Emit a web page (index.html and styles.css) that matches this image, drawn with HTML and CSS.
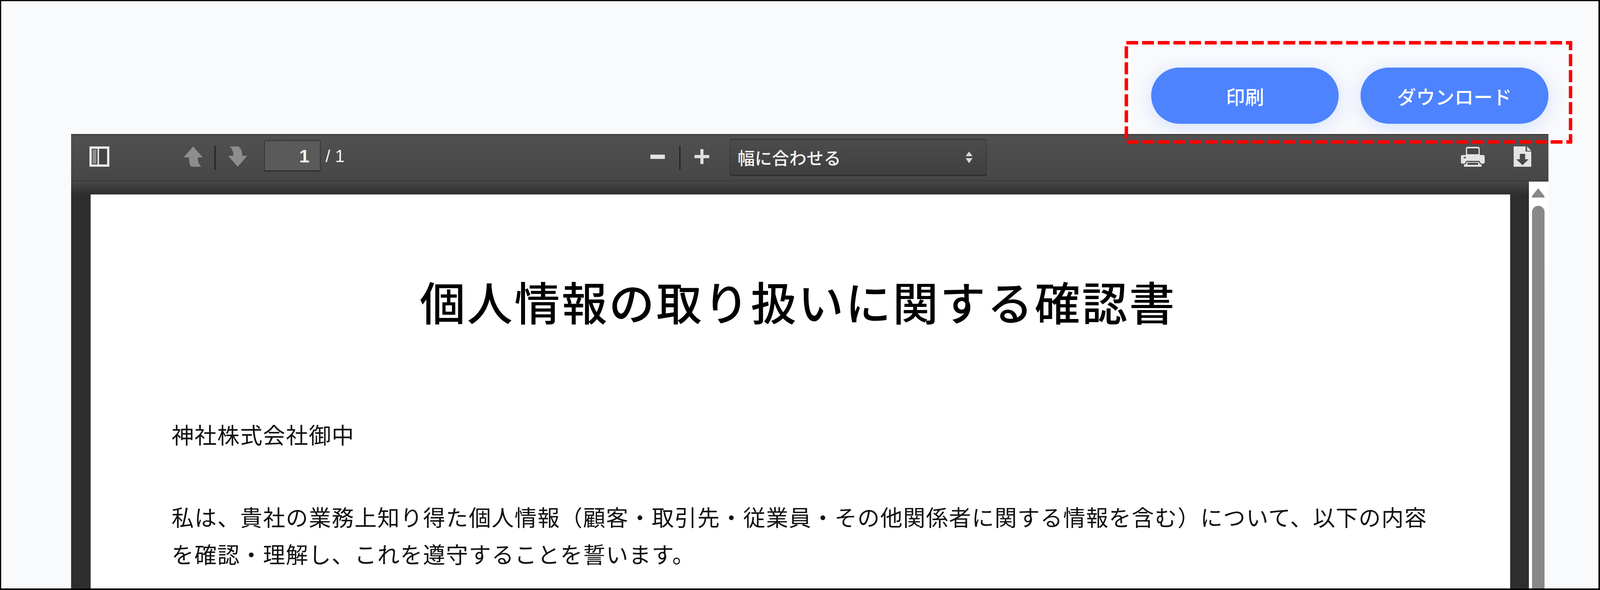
FILE: index.html
```html
<!DOCTYPE html>
<html lang="ja">
<head>
  <meta charset="UTF-8">
  <title>個人情報の取り扱いに関する確認書</title>
  <link rel="stylesheet" href="styles.css">
</head>
<body>

  <div class="frame">
    <div class="actions">
      <button class="action-button">印刷</button>
      <button class="action-button">ダウンロード</button>
    </div>

    <div class="viewer">
      <!-- PDF toolbar -->
      <div class="toolbar">
        <svg class="icon sidebar-icon" viewBox="0 0 52 52" preserveAspectRatio="none">
          <rect x="3" y="3" width="46" height="46" fill="#444" stroke="#e8e8e8" stroke-width="6"/>
          <rect x="8" y="8" width="10" height="36" fill="#8c8c8c"/>
          <rect x="21" y="6" width="4" height="40" fill="#e8e8e8"/>
        </svg>
        <svg class="icon arrow-up" viewBox="0 0 50 52" preserveAspectRatio="none">
          <path d="M25 0 L50 28 H37 C37 38 40 46 46 52 H20 C15 46 14 38 14 28 H0 Z" fill="#8d8d8d"/>
        </svg>
        <div class="divider page-divider"></div>
        <svg class="icon arrow-down" viewBox="0 0 50 52" preserveAspectRatio="none">
          <path d="M25 52 L50 24 H37 C37 14 34 5 27 0 H4 C10 5 14 14 14 24 H0 Z" fill="#8d8d8d"/>
        </svg>
        <div class="page-input">1</div>
        <div class="page-count">/ 1</div>

        <div class="zoom-out"></div>
        <div class="divider zoom-divider"></div>
        <div class="zoom-in"></div>
        <div class="zoom-select">
          <span>幅に合わせる</span>
          <svg class="select-arrows" viewBox="0 0 18 30" preserveAspectRatio="none">
            <path d="M9 0 L18 12 H0 Z M0 17 H18 L9 30 Z" fill="#d8d8d8"/>
          </svg>
        </div>

        <svg class="icon print-icon" viewBox="0 0 62 52" preserveAspectRatio="none">
          <path d="M13 22 V6 Q13 1 18 1 H44 Q49 1 49 6 V22 H58 Q62 22 62 27 V41 Q62 44 58 44 H52 L48 37 H14 L10 44 H4 Q0 44 0 41 V27 Q0 22 4 22 Z" fill="#e4e4e4"/>
          <rect x="16" y="5" width="30" height="15" rx="2" fill="#484848"/>
          <rect x="7" y="26" width="6" height="5" fill="#777"/>
          <path d="M15 40 H47 L50 46 H54 V52 H8 V46 H12 Z" fill="#e4e4e4"/>
          <rect x="17" y="42" width="28" height="5" fill="#484848"/>
        </svg>
        <svg class="icon save-icon" viewBox="0 0 46 52" preserveAspectRatio="none">
          <path d="M0 0 H31 V13 H46 V52 H0 Z" fill="#e4e4e4"/>
          <path d="M35 0 L46 11 H35 Z" fill="#e4e4e4"/>
          <path d="M16 19 H30 V33 H39 L23 48 L7 33 H16 Z" fill="#484848"/>
        </svg>
      </div>

      <div class="viewer-body">
        <div class="page-area">
          <div class="page">
            <h1 class="doc-title">個人情報の取り扱いに関する確認書</h1>
            <div class="doc-body">
              <p class="doc-to">神社株式会社御中</p>
              <p class="doc-text">私は、貴社の業務上知り得た個人情報（顧客・取引先・従業員・その他関係者に関する情報を含む）について、以下の内容を確認・理解し、これを遵守することを誓います。</p>
            </div>
          </div>
        </div>
        <div class="scrollbar">
          <div class="scroll-up"></div>
          <div class="scroll-thumb"></div>
        </div>
      </div>
    </div>

    <!-- Red annotation around the buttons -->
    <svg class="callout" viewBox="0 0 1169 263" preserveAspectRatio="none">
      <rect x="4.5" y="4.5" width="1160" height="254" fill="none" stroke="#ff0000" stroke-width="9" stroke-dasharray="31 10"/>
    </svg>
  </div>

</body>
</html>
```

FILE: styles.css
```css
/* The shot is 4178 wide; horizontal sizes scale with the window from this unit */
:root {
  --u: calc(100vw / 4178);
}

* {
  box-sizing: border-box;
}

body {
  margin: 0;
  overflow: hidden;
  font-family: "Noto Sans CJK JP", "Liberation Sans", sans-serif;
}

.frame {
  position: relative;
  height: 1511px;
  padding: 170px calc(131 * var(--u)) 0 calc(183 * var(--u));
  background-color: #f9fafc;
  border: solid #000;
  border-width: 3px 4px 4px 3px;
  overflow: hidden;
}

.actions {
  display: flex;
  justify-content: flex-end;
  gap: calc(57 * var(--u));
  margin-bottom: 23px;
}

.action-button {
  width: calc(490 * var(--u));
  height: 144px;
  border: none;
  border-radius: 72px;
  background-color: #4d83ff;
  color: #fff;
  font-family: inherit;
  font-size: calc(50 * var(--u));
  font-weight: 500;
  box-shadow: 0 8px 48px rgba(77, 131, 255, 0.22);
}

.viewer {
  position: relative;
  border-top: 3px solid #fff;
}

/* Toolbar */
.toolbar {
  display: flex;
  align-items: flex-start;
  height: 122px;
  padding: 32px calc(44 * var(--u)) 0 calc(48 * var(--u));
  color: #f2f2f2;
  background: linear-gradient(#3e3e3e 0, #505050 6px, #474747 116px, #3a3a3a 122px);
}

.icon {
  flex: none;
  height: 52px;
}

.sidebar-icon {
  width: calc(52 * var(--u));
}

.arrow-up {
  width: calc(50 * var(--u));
  margin-left: calc(193 * var(--u));
}

.divider {
  flex: none;
  width: calc(3 * var(--u));
  height: 62px;
  background-color: #222;
}

.page-divider {
  margin-left: calc(31 * var(--u));
  margin-top: -2px;
}

.arrow-down {
  width: calc(50 * var(--u));
  margin-left: calc(33 * var(--u));
}

.page-input {
  flex: none;
  width: calc(147 * var(--u));
  height: 81px;
  margin-left: calc(44 * var(--u));
  margin-top: -16px;
  padding-right: calc(27 * var(--u));
  text-align: right;
  font: bold 47px/77px "Liberation Sans", sans-serif;
  background-color: #5a5a5a;
  border: solid #333;
  border-width: 2px 2px 4px;
  border-radius: 4px;
}

.page-count {
  flex: none;
  width: calc(60 * var(--u));
  margin-left: calc(13 * var(--u));
  margin-top: -16px;
  font: 44px/81px "Liberation Sans", sans-serif;
  white-space: nowrap;
}

.zoom-out {
  flex: none;
  width: calc(38 * var(--u));
  height: 11px;
  margin-left: calc(788 * var(--u));
  margin-top: 21px;
  background-color: #e2e2e2;
}

.zoom-divider {
  margin-left: calc(38 * var(--u));
  margin-top: -2px;
}

.zoom-in {
  flex: none;
  width: calc(38 * var(--u));
  height: 38px;
  margin-left: calc(37 * var(--u));
  margin-top: 7px;
  background: linear-gradient(#e2e2e2, #e2e2e2) center / 100% 8px no-repeat,
              linear-gradient(#e2e2e2, #e2e2e2) center / calc(8 * var(--u)) 100% no-repeat;
}

.zoom-select {
  flex: none;
  display: flex;
  align-items: center;
  justify-content: space-between;
  width: calc(672 * var(--u));
  height: 95px;
  margin-left: calc(53 * var(--u));
  margin-top: -19px;
  padding: 0 calc(36 * var(--u)) 0 calc(20 * var(--u));
  font-size: calc(45 * var(--u));
  font-weight: 500;
  background: linear-gradient(#4c4c4c, #3f3f3f);
  border: solid #2f2f2f;
  border-width: 2px 1px 4px;
  border-radius: 4px;
}

.select-arrows {
  width: calc(18 * var(--u));
  height: 30px;
}

.print-icon {
  width: calc(62 * var(--u));
  margin-left: auto;
}

.save-icon {
  width: calc(46 * var(--u));
  margin-left: calc(76 * var(--u));
}

/* Document area */
.viewer-body {
  display: flex;
  height: 1100px;
}

.page-area {
  flex: 1;
  padding: 33px calc(49 * var(--u)) 0 calc(51 * var(--u));
  background: linear-gradient(#474747, #2e2e2e 33px) #3a3a3a;
}

.page {
  height: 1100px;
  padding-top: 187px;
  background-color: #fff;
  color: #111;
}

.doc-title {
  margin: 0;
  padding-right: calc(12 * var(--u));
  text-align: center;
  font-size: calc(119 * var(--u));
  font-weight: 500;
  line-height: 172px;
  letter-spacing: calc(4.5 * var(--u));
  color: #000;
}

.doc-body {
  padding: 0 calc(194 * var(--u)) 0 calc(211 * var(--u));
}

.doc-to {
  margin: 207px 0 0;
  font-size: calc(58 * var(--u));
  line-height: 95px;
  letter-spacing: calc(1.7 * var(--u));
}

.doc-text {
  margin: 116px 0 0;
  font-size: calc(58 * var(--u));
  line-height: 95px;
  letter-spacing: calc(1.7 * var(--u));
}

.scrollbar {
  flex: none;
  width: calc(51 * var(--u));
  padding: 17px calc(10 * var(--u)) 0 0;
  border-left: calc(9 * var(--u)) solid #fff;
  background: linear-gradient(#fff 120px, #f9fafc 500px);
}

.scroll-up {
  height: 24px;
  background-color: #888;
  clip-path: polygon(50% 0, 100% 85%, 100% 100%, 0 100%, 0 85%);
}

.scroll-thumb {
  height: 1100px;
  margin-top: 21px;
  background-color: #888;
  border-radius: 16px 16px 0 0;
}

.callout {
  position: absolute;
  left: calc(2934 * var(--u));
  top: 102px;
  width: calc(1169 * var(--u));
  height: 263px;
}
```
